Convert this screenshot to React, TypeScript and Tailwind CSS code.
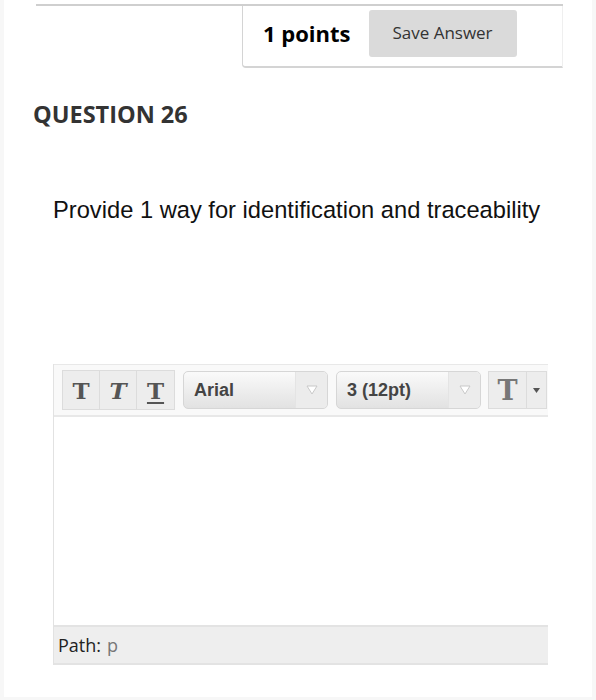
import React from 'react';

const openSans = { fontFamily: '"Open Sans", "Noto Sans", sans-serif' };

function ToolbarT({ italic, underline }: { italic?: boolean; underline?: boolean }) {
  return (
    <div className="flex h-[38px] w-[37px] items-center justify-center border-r border-[#dcdcdc] last:border-r-0">
      <span
        className={
          'text-[23px] font-bold leading-none text-[#555] ' +
          (italic ? 'italic ' : '') +
          (underline ? 'underline decoration-2 underline-offset-[3px] ' : '')
        }
        style={{ fontFamily: '"DejaVu Serif", "Liberation Serif", serif' }}
      >
        T
      </span>
    </div>
  );
}

function SelectBox({ label }: { label: string }) {
  return (
    <div className="flex h-[38px] w-[145px] overflow-hidden rounded-[5px] border border-[#d6d6d6] bg-gradient-to-b from-[#fafafa] to-[#e2e2e2]">
      <div
        className="flex flex-1 items-center pl-[10px] text-[18px] font-bold text-[#444]"
        style={{ fontFamily: '"Liberation Sans", Arial, sans-serif' }}
      >
        {label}
      </div>
      <div className="flex w-[32px] items-center justify-center border-l border-[#e4e4e4] bg-[#ececec]">
        <svg width="12" height="10" viewBox="0 0 12 10">
          <path d="M1 1 L11 1 L6 9 Z" fill="#fff" stroke="#c8c8c8" strokeWidth="1" />
        </svg>
      </div>
    </div>
  );
}

export default function App() {
  return (
    <div className="min-h-[700px] w-[596px] bg-[#f7f7f7] px-[4px] pb-[3px]">
      <div className="h-[697px] bg-white pt-[4px]">
        <div className="ml-[32px] w-[527px] border-t-2 border-[#cfcfcf]">
          <div className="ml-[206px] flex h-[62px] items-center rounded-bl-[4px] border-b-2 border-l border-r border-[#d4d4d4] border-r-[#efefef] pb-[6px] pl-[20px]">
            <span className="text-[22px] font-bold text-black" style={openSans}>
              1 points
            </span>
            <div
              className="ml-[18px] flex h-[47px] w-[148px] items-center justify-center rounded-[3px] bg-[#dadada] text-[17px] text-[#333]"
              style={openSans}
            >
              Save Answer
            </div>
          </div>
        </div>

        <div className="ml-[29px] mt-[30px] text-[23.5px] font-bold leading-[32px] text-[#333]" style={openSans}>
          QUESTION 26
        </div>

        <div
          className="ml-[49px] mt-[66px] text-[23.7px] leading-[28px] text-[#111]"
          style={{ fontFamily: '"Liberation Sans", Arial, sans-serif' }}
        >
          Provide 1 way for identification and traceability
        </div>

        <div className="ml-[49px] mt-[140px] w-[495px] border-l border-[#e2e2e2]">
          <div className="flex h-[53px] items-center gap-[8px] border-b-2 border-t border-[#e8e8e8] bg-[#f9f9f9] pl-[8px]">
            <div className="flex border border-[#dcdcdc] bg-[#ededed]">
              <ToolbarT />
              <ToolbarT italic />
              <ToolbarT underline />
            </div>
            <SelectBox label="Arial" />
            <SelectBox label="3 (12pt)" />
            <div className="ml-[-1px] flex h-[38px] border border-[#dcdcdc] bg-[#ededed]">
              <div className="flex w-[38px] items-center justify-center border-r border-[#dcdcdc]">
                <span
                  className="text-[27px] font-bold leading-none text-[#777]"
                  style={{ fontFamily: '"DejaVu Serif", "Liberation Serif", serif' }}
                >
                  T
                </span>
              </div>
              <div className="flex w-[19px] items-center justify-center">
                <svg width="7" height="5" viewBox="0 0 7 5">
                  <path d="M0 0 L7 0 L3.5 5 Z" fill="#555" />
                </svg>
              </div>
            </div>
          </div>
          <div className="h-[208px] bg-white" />
          <div className="flex h-[40px] items-center border-b-2 border-t-2 border-[#e3e3e3] bg-[#eeeeee] pl-[4px] text-[18px]" style={openSans}>
            <span className="text-[#222]">Path:</span>
            <span className="ml-[6px] text-[#777]">p</span>
          </div>
        </div>
      </div>
    </div>
  );
}
